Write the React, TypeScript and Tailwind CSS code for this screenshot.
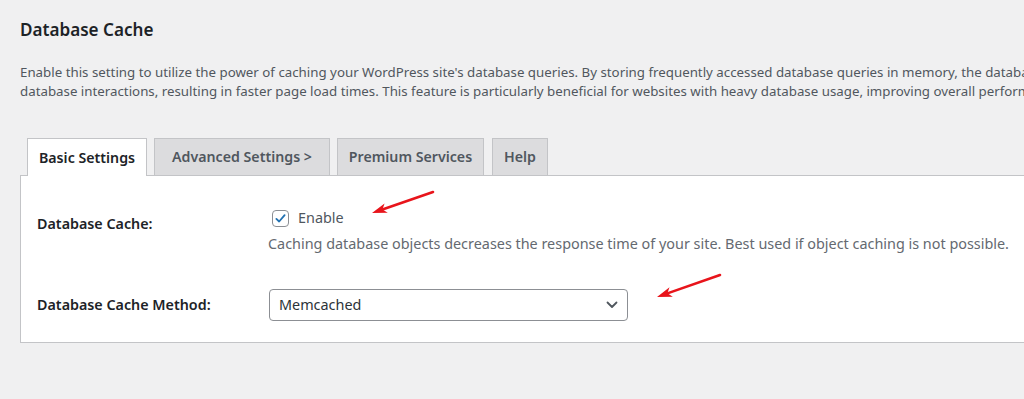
import React from "react";

const font = "font-['Segoe_UI','Noto_Sans',sans-serif]";

function Arrow({ x1, y1, x2, y2 }: { x1: number; y1: number; x2: number; y2: number }) {
  const dx = x2 - x1;
  const dy = y2 - y1;
  const len = Math.hypot(dx, dy);
  const ux = dx / len;
  const uy = dy / len;
  const bx = x2 - 15 * ux;
  const by = y2 - 15 * uy;
  const px = -uy;
  const py = ux;
  const w = 5;
  const pts = `${x2},${y2} ${bx + w * px},${by + w * py} ${x2 - 11 * ux},${y2 - 11 * uy} ${bx - w * px},${by - w * py}`;
  return (
    <g>
      <line x1={x1} y1={y1} x2={x2 - 11 * ux} y2={y2 - 11 * uy} stroke="#e8141b" strokeWidth={2.6} strokeLinecap="round" />
      <polygon points={pts} fill="#e8141b" />
    </g>
  );
}

const tabBase = "h-[37px] flex items-center justify-center bg-[#dcdcde] border border-b-0 border-[#c3c4c7] text-[14.2px] font-semibold text-[#50575e]";

export default function App() {
  return (
    <div className={`relative w-[1024px] h-[399px] overflow-hidden bg-[#f0f0f1] ${font}`}>
      <div className="w-[1200px] pl-5 pt-[18px]">
        <h2 className="text-[17.1px] leading-6 font-semibold text-[#1d2327]">Database Cache</h2>
        <p className="mt-[21px] text-[13.3px] leading-[19px] text-[#50575e] whitespace-nowrap">
          Enable this setting to utilize the power of caching your WordPress site's database queries. By storing frequently accessed database queries in memory, the database load is reduced, minimizing
          <br />
          database interactions, resulting in faster page load times. This feature is particularly beneficial for websites with heavy database usage, improving overall performance.
        </p>
        <div className="mt-[37px] flex items-end gap-[7px] pl-[7px]">
          <div className="relative z-10 -mb-px h-[38px] w-[120px] flex items-center justify-center bg-white border border-b-0 border-[#c3c4c7] text-[14.2px] font-semibold text-[#1d2327]">
            Basic Settings
          </div>
          <div className={`${tabBase} w-[176px]`}>Advanced Settings &gt;</div>
          <div className={`${tabBase} w-[147px]`}>Premium Services</div>
          <div className={`${tabBase} w-[56px] ml-px`}>Help</div>
        </div>
        <div className="h-[168px] bg-white border border-[#c3c4c7] pl-4 pt-[33px]">
          <div className="flex">
            <div className="w-[231px] pt-[5px] text-[14.3px] leading-5 font-semibold text-[#1d2327]">Database Cache:</div>
            <div>
              <label className="flex items-center h-[18px]">
                <span className="ml-[4px] w-[17px] h-[17px] rounded-[4px] border border-[#8c8f94] bg-white flex items-center justify-center">
                  <svg width="15" height="15" viewBox="0 0 20 20">
                    <path d="M4.5 10.5 L8.2 14 L15.5 5.5" fill="none" stroke="#2271b1" strokeWidth="2.4" strokeLinecap="round" strokeLinejoin="round" />
                  </svg>
                </span>
                <span className="ml-[9px] text-[14.4px] leading-5 text-[#50575e]">Enable</span>
              </label>
              <div className="mt-[7px] text-[14.4px] leading-5 text-[#646970]">
                Caching database objects decreases the response time of your site. Best used if object caching is not possible.
              </div>
            </div>
          </div>
          <div className="flex items-center mt-[35px]">
            <div className="w-[232px] text-[14.3px] leading-5 font-semibold text-[#1d2327]">Database Cache Method:</div>
            <div className="w-[359px] h-[32px] rounded-[4px] border border-[#8c8f94] bg-white flex items-center justify-between pl-[9px] pr-[9px]">
              <span className="text-[14.4px] text-[#2c3338]">Memcached</span>
              <svg width="12" height="8" viewBox="0 0 12 8">
                <path d="M1.5 1.5 L6 6 L10.5 1.5" fill="none" stroke="#50575e" strokeWidth="1.8" strokeLinecap="round" strokeLinejoin="round" />
              </svg>
            </div>
          </div>
        </div>
      </div>
      <svg className="pointer-events-none absolute inset-0" width="1024" height="399">
        <Arrow x1={433} y1={192} x2={372} y2={213} />
        <Arrow x1={720} y1={275} x2={657} y2={297} />
      </svg>
    </div>
  );
}
